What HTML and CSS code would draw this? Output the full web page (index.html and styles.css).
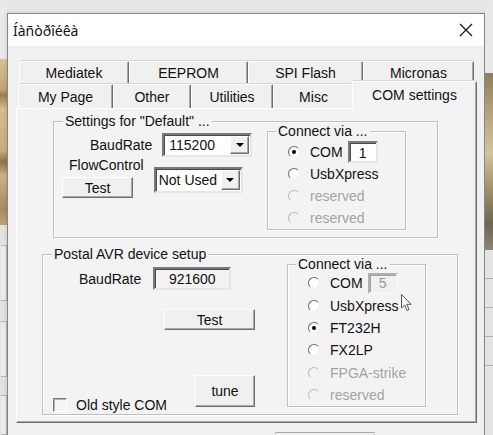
FILE: index.html
```html
<!DOCTYPE html>
<html>
<head>
<meta charset="utf-8">
<link rel="stylesheet" href="styles.css">
</head>
<body>
<div class="desk">
  <div class="strip strip-left">
    <div class="sl-top"></div>
    <div class="sl-img"></div>
    <div class="sl-bottom">
      <div class="sl-box b1"></div>
      <div class="sl-box b2"></div>
      <div class="sl-box b3"></div>
    </div>
  </div>

  <div class="window">
    <div class="titlebar">
      <span class="title">Íàñòðîéêà</span>
      <svg class="close" width="14" height="14" viewBox="0 0 14 14"><path d="M1 1 L13 13 M13 1 L1 13" stroke="#1a1a1a" stroke-width="1.3" fill="none"/></svg>
    </div>
    <div class="client">
      <div class="tabs">
        <div class="tabrow row1">
          <div class="tab t-mediatek">Mediatek</div>
          <div class="tab t-eeprom">EEPROM</div>
          <div class="tab t-spi">SPI Flash</div>
          <div class="tab t-micronas">Micronas</div>
        </div>
        <div class="tabrow row2">
          <div class="tab t-mypage">My Page</div>
          <div class="tab t-other">Other</div>
          <div class="tab t-util">Utilities</div>
          <div class="tab t-misc">Misc</div>
          <div class="tab t-com active">COM settings</div>
        </div>
      </div>

      <div class="panel">
        <fieldset class="group g1">
          <legend>Settings for "Default" ...</legend>
          <div class="gbody">
            <div class="g1-left">
              <div class="baud-row">
                <span class="lbl baud-lbl">BaudRate</span>
                <div class="combo c1"><span class="val">115200</span><span class="ddbtn"><i class="tri"></i></span></div>
              </div>
              <div class="flow-row">
                <div class="flow-col">
                  <span class="lbl flow-lbl">FlowControl</span>
                  <div class="btn test1">Test</div>
                </div>
                <div class="combo c2"><span class="val">Not Used</span><span class="ddbtn"><i class="tri"></i></span></div>
              </div>
            </div>
            <fieldset class="group conn conn1">
              <legend>Connect via ...</legend>
              <div class="opt o1"><span class="radio checked"></span><span class="olbl">COM</span><span class="edit com1">1</span></div>
              <div class="opt o1"><span class="radio"></span><span class="olbl">UsbXpress</span></div>
              <div class="opt o1 dis"><span class="radio"></span><span class="olbl">reserved</span></div>
              <div class="opt o1 dis"><span class="radio"></span><span class="olbl">reserved</span></div>
            </fieldset>
          </div>
        </fieldset>

        <fieldset class="group g2">
          <legend>Postal AVR device setup</legend>
          <div class="gbody">
            <div class="g2-left">
              <div class="baud2-row">
                <span class="lbl baud2-lbl">BaudRate</span>
                <span class="edit ro rate">921600</span>
              </div>
              <div class="btn test2">Test</div>
              <div class="bottom-row">
                <div class="chk-wrap"><span class="chk"></span><span class="lbl">Old style COM</span></div>
                <div class="btn tune">tune</div>
              </div>
            </div>
            <fieldset class="group conn conn2">
              <legend>Connect via ...</legend>
              <div class="opt o2"><span class="radio"></span><span class="olbl">COM</span><span class="edit com5">5</span></div>
              <div class="opt o2"><span class="radio"></span><span class="olbl">UsbXpress</span></div>
              <div class="opt o2"><span class="radio checked"></span><span class="olbl">FT232H</span></div>
              <div class="opt o2"><span class="radio"></span><span class="olbl">FX2LP</span></div>
              <div class="opt o2 dis"><span class="radio"></span><span class="olbl">FPGA-strike</span></div>
              <div class="opt o2 dis"><span class="radio"></span><span class="olbl">reserved</span></div>
            </fieldset>
          </div>
        </fieldset>
      </div>
      <div class="footer"><div class="footbtn"></div></div>
    </div>
  </div>

  <div class="strip strip-right">
    <div class="sr-top"></div>
    <div class="sr-img"></div>
    <div class="sr-bottom">
      <div class="sr-line"></div>
      <div class="sr-line"></div>
      <div class="sr-line"></div>
      <div class="sr-line"></div>
    </div>
  </div>

  <svg class="cursor" width="12" height="18" viewBox="0 0 12 18"><path d="M0.5 0.5 L0.5 14 L3.7 11 L6 16.5 L8 15.6 L5.8 10.3 L10 10.3 Z" fill="#fff" stroke="#555" stroke-width="1" stroke-linejoin="round"/></svg>
</div>
</body>
</html>
```

FILE: styles.css
```css
* { box-sizing: border-box; }
html, body { margin: 0; padding: 0; }
body {
  width: 493px;
  height: 435px;
  overflow: hidden;
  background: #e6e6e6;
  font-family: "Liberation Sans", Arial, sans-serif;
  font-size: 14px;
  line-height: 16px;
  color: #111;
}
.desk {
  position: relative;
  display: flex;
  width: 493px;
  height: 435px;
  overflow: hidden;
}

/* background strips */
.strip { flex: none; display: flex; flex-direction: column; }
.strip-left { width: 7px; }
.sl-top { height: 66px; background: #e9e9e9; }
.sl-img {
  height: 184px;
  background: linear-gradient(180deg, #d8c49a 0%, #c2a370 18%, #9f7d4f 22%, #d4bd90 30%, #c9ad7a 55%, #8e7048 62%, #c9b287 70%, #a88c62 90%, #b9a27a 100%);
}
.sl-bottom { flex: 1; background: #e2e2e2; display: flex; flex-direction: column; }
.sl-box { border: 1px solid #b5b5b5; border-left: none; background: #ececec; margin-left: 1px; }
.sl-box.b1 { height: 56px; margin-top: 20px; }
.sl-box.b2 { height: 56px; margin-top: 20px; }
.sl-box.b3 { height: 40px; margin-top: 18px; }

.strip-right { width: 8px; }
.sr-top { height: 73px; background: #e8e8e8; }
.sr-img {
  height: 177px;
  background: linear-gradient(180deg, #8f7e5d 0%, #b49e78 20%, #d4c3a0 45%, #a3916c 65%, #6e6650 85%, #8d8470 100%);
}
.sr-bottom { flex: 1; background: #e4e4e4; display: flex; flex-direction: column; }
.sr-line { height: 1px; background: #b0b0b0; margin-top: 28px; }

/* window */
.window {
  flex: none;
  width: 478px;
  height: 440px;
  margin-top: 13px;
  border: 1px solid #868686;
  border-bottom: none;
  background: #f0f0f0;
  display: flex;
  flex-direction: column;
  box-shadow: 0 0 4px rgba(0,0,0,0.15);
}
.titlebar {
  height: 32px;
  flex: none;
  background: #fff;
  display: flex;
  align-items: center;
  justify-content: space-between;
  padding: 0 11px 0 5px;
}
.title {
  font-family: "Noto Sans", "Open Sans", sans-serif;
  font-size: 14px;
  color: #111;
  padding-top: 1px;
}
.close { display: block; }

.client {
  flex: 1;
  padding: 15px 0 0 8px;
}

/* tabs */
.tabs { display: flex; flex-direction: column; }
.tabrow { display: flex; }
.row1 { margin-left: 3px; height: 23px; }
.row2 { margin-left: 2px; height: 24px; }
.tab {
  flex: none;
  text-align: center;
  background: #f0f0f0;
  border-top: 1px solid #fff;
  border-left: 1px solid #fff;
  border-right: 1px solid #6f6f6f;
  box-shadow: inset -1px 0 0 #a8a8a8, 0 -1px 0 #d6d6d6;
  border-radius: 2px 2px 0 0;
  padding-top: 3px;
  color: #111;
}
.row2 .tab { padding-top: 4px; }
.t-mediatek { width: 110px; }
.t-eeprom { width: 119px; }
.t-spi { width: 115px; }
.t-micronas { width: 111px; }
.t-mypage { width: 95px; }
.t-other { width: 78px; }
.t-util { width: 82px; }
.t-misc { width: 81px; }
.t-com { width: 121px; }
.tab.active {
  position: relative;
  z-index: 2;
  width: 125px;
  height: 28px;
  margin: -3px -2px -1px -2px;
  padding-top: 5px;
  background: #f3f3f3;
}

/* panel */
.panel {
  position: relative;
  z-index: 1;
  width: 461px;
  height: 315px;
  background: #f3f3f3;
  border: 1px solid #fff;
  border-right-color: #6f6f6f;
  border-bottom-color: #6f6f6f;
  box-shadow: inset -1px -1px 0 #a8a8a8;
  padding-top: 4px;
}

/* group boxes */
.group {
  margin: 0;
  padding: 0;
  min-width: 0;
  border: 1px solid #c0c0c0;
  box-shadow: inset 1px 1px 0 #fff, 1px 1px 0 #fff;
}
.group legend {
  padding: 0 2px;
  margin-left: 9px;
  line-height: 16px;
  background: #f3f3f3;
  color: #111;
}
.gbody { display: flex; align-items: flex-start; }
.g1 { width: 385px; margin-left: 36px; padding-bottom: 7px; }
.g2 { width: 416px; margin-left: 25px; margin-top: 8px; padding-bottom: 1px; }

.lbl { white-space: nowrap; }

/* group 1 left */
.g1-left { display: flex; flex-direction: column; }
.baud-row { display: flex; align-items: center; margin-top: 4px; }
.baud-lbl { margin-left: 36px; }
.flow-row { display: flex; align-items: flex-start; }
.flow-col { display: flex; flex-direction: column; align-items: flex-start; margin-left: 8px; }
.flow-lbl { margin-left: 7px; }

.combo {
  display: flex;
  align-items: stretch;
  background: #fff;
  border: 2px solid;
  border-color: #7a7a7a #e6e6e6 #e6e6e6 #7a7a7a;
  box-shadow: inset 1px 1px 0 #4a4a4a;
}
.combo .val { flex: 1; padding-left: 5px; display: flex; align-items: center; white-space: nowrap; }
.c1 { width: 90px; height: 24px; margin-left: 10px; }
.c2 { width: 89px; height: 26px; margin-left: 10px; margin-top: 10px; }
.c2 .val { padding-left: 3px; }
.ddbtn {
  width: 19px;
  margin: 1px 1px 1px 0;
  background: #f0f0f0;
  border: 1px solid;
  border-color: #fff #6f6f6f #6f6f6f #fff;
  box-shadow: inset -1px -1px 0 #a8a8a8;
  display: flex;
  align-items: center;
  justify-content: center;
}
.tri {
  display: block;
  width: 0; height: 0;
  border-left: 4px solid transparent;
  border-right: 4px solid transparent;
  border-top: 4px solid #000;
}

.btn {
  display: flex;
  align-items: center;
  justify-content: center;
  background: #f0f0f0;
  border: 1px solid;
  border-color: #fff #6f6f6f #6f6f6f #fff;
  box-shadow: inset -1px -1px 0 #a8a8a8;
  color: #111;
}
.test1 { width: 71px; height: 21px; margin-top: 4px; }

/* connect boxes */
.conn { width: 139px; margin-left: auto; margin-right: 31px; margin-top: -6px; }
.conn legend { margin-left: 8px; }
.conn1 { padding-top: 2px; }
.opt { display: flex; align-items: center; margin-left: 20px; }
.o1 { height: 22px; }
.o2 { height: 22.4px; }
.radio {
  flex: none;
  width: 12px;
  height: 12px;
  border-radius: 50%;
  background: #fff;
  border: 1.5px solid;
  border-color: #6a6a6a #ededed #ededed #6a6a6a;
  display: flex;
  align-items: center;
  justify-content: center;
  margin-right: 10px;
}
.radio.checked::after {
  content: "";
  width: 4px;
  height: 4px;
  border-radius: 50%;
  background: #000;
}
.dis .radio { background: #f3f3f3; border-color: #b8b8b8 #f0f0f0 #f0f0f0 #b8b8b8; }
.dis .olbl { color: #a3a3a3; }
.olbl { white-space: nowrap; }

.edit {
  display: flex;
  align-items: center;
  justify-content: center;
  background: #fff;
  border: 2px solid;
  border-color: #7a7a7a #e6e6e6 #e6e6e6 #7a7a7a;
  box-shadow: inset 1px 1px 0 #4a4a4a;
}
.com1 { width: 30px; height: 22px; margin-left: 5px; padding-top: 2px; }
.com5 { width: 30px; height: 21px; margin-left: 5px; background: #f0f0f0; color: #9a9a9a; box-shadow: inset 1px 1px 0 #a0a0a0; border-color: #b0b0b0 #f6f6f6 #f6f6f6 #b0b0b0; }

/* group 2 left */
.g2-left { display: flex; flex-direction: column; align-items: flex-start; }
.baud2-row { display: flex; align-items: center; margin-top: 5px; }
.baud2-lbl { margin-left: 36px; }
.rate { width: 78px; height: 23px; margin-left: 12px; }
.edit.ro { background: #f3f3f3; }
.test2 { width: 91px; height: 21px; margin-top: 19px; margin-left: 121px; }
.bottom-row { display: flex; align-items: flex-start; margin-top: 45px; }
.chk-wrap { display: flex; align-items: center; margin-left: 10px; margin-top: 22px; }
.chk {
  width: 14px;
  height: 14px;
  background: #f4f4f4;
  border: 1px solid;
  border-color: #7a7a7a #fff #fff #7a7a7a;
  box-shadow: inset 1px 1px 0 #b4b4b4;
  margin-right: 9px;
}
.tune { width: 60px; height: 32px; margin-left: 28px; }

/* footer below panel */
.footer { display: flex; padding-left: 259px; margin-top: 9px; }
.footbtn { width: 100px; height: 12px; border-top: 1px solid #a8a8a8; border-left: 1px solid #d8d8d8; border-right: 1px solid #d8d8d8; }

/* mouse pointer overlay */
.cursor { position: absolute; left: 401px; top: 294px; z-index: 5; }
```
